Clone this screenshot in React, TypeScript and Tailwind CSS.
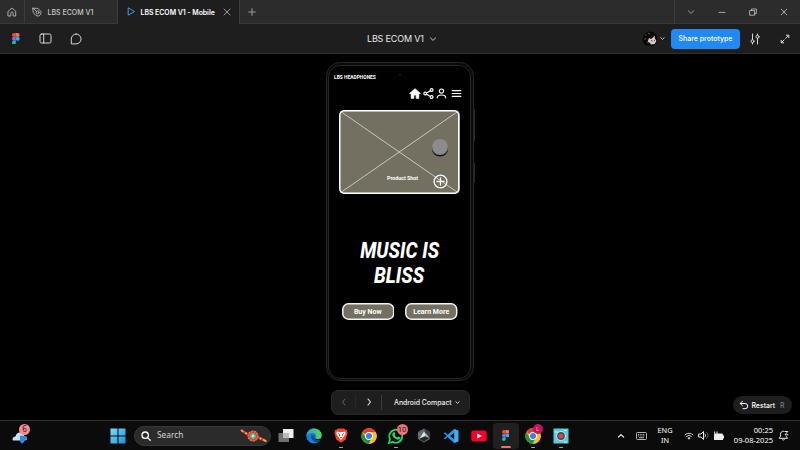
import React from "react";

type P = { className?: string; children?: React.ReactNode };

const Line = ({ w = 12, sw = 1, className = "", children, vb = "0 0 12 12" }: P & { w?: number; sw?: number; vb?: string }) => (
  <svg width={w} height={w} viewBox={vb} fill="none" stroke="currentColor" strokeWidth={sw} strokeLinecap="round" strokeLinejoin="round" className={"shrink-0 " + className}>
    {children}
  </svg>
);

const FigmaLogo = ({ h = 11 }: { h?: number }) => (
  <svg width={(h * 2) / 3} height={h} viewBox="0 0 20 30" className="shrink-0">
    <path d="M10 0H5a5 5 0 0 0 0 10h5z" fill="#f24e1e" />
    <path d="M10 0h5a5 5 0 0 1 0 10h-5z" fill="#ff7262" />
    <path d="M10 10H5a5 5 0 0 0 0 10h5z" fill="#a259ff" />
    <circle cx="15" cy="15" r="5" fill="#1abcfe" />
    <path d="M5 20h5v5a5 5 0 1 1-5-5z" fill="#0acf83" />
  </svg>
);

const Chrome = () => (
  <svg width="16" height="16" viewBox="0 0 16 16">
    <circle cx="8" cy="8" r="7.7" fill="#fbc116" />
    <path d="M1.3 4.2A7.7 7.7 0 0 1 14.7 4.2L8 8z" fill="#e33b2e" />
    <path d="M1.3 4.2A7.7 7.7 0 0 0 7.8 15.7L11 9.8 5 9.8z" fill="#229342" />
    <path d="M8 4.2h6.7a7.7 7.7 0 0 1-6.9 11.5L11.3 10z" fill="#fbc116" />
    <circle cx="8" cy="8" r="3.9" fill="#fff" />
    <circle cx="8" cy="8" r="3" fill="#3b7fe8" />
  </svg>
);

function TitleBar() {
  return (
    <div className="flex h-6 items-stretch border-b border-[#383838] bg-[#2c2c2c] text-[7px] text-[#c8c8c8]">
      <div className="flex w-[25px] items-center justify-center border-r border-[#3d3d3d]">
        <Line w={10} vb="0 0 10 10" sw={0.8}>
          <path d="M1.3 4.2 5 1l3.7 3.2V9H6.2V6.2a1.2 1.2 0 0 0-2.4 0V9H1.3z" />
        </Line>
      </div>
      <div className="flex w-[93px] items-center border-r border-[#3d3d3d] pl-[7px]">
        <Line w={10} vb="0 0 10 10" sw={0.8}>
          <path d="M1 1.2 6 1.4 9 4.600 8.700 7.200 6.800 9.100 4 8.600 1.600 6z" />
          <circle cx="5.600" cy="5.400" r="1.500" />
          <path d="m1 1.200 3.400 3.200" />
        </Line>
        <span className="ml-[5.500px] pt-[3px] font-medium whitespace-nowrap">LBS ECOM V1</span>
      </div>
      <div className="-mb-px flex w-[122px] items-center border-r border-[#3d3d3d] bg-[#1e1e1e] pb-px pl-[9px] text-white">
        <Line w={9} vb="0 0 9 9" className="text-[#3f9be8]">
          <path d="M1.5 1 7.5 4.5 1.5 8z" />
        </Line>
        <span className="ml-[4.500px] w-[74.500px] pt-[3px] font-semibold tracking-[-0.010em] whitespace-nowrap">LBS ECOM V1 - Mobile</span>
        <Line w={8} vb="0 0 8 8" sw={0.7} className="ml-[8px] text-[#d0d0d0]">
          <path d="m1 1 6 6M7 1 1 7" />
        </Line>
      </div>
      <div className="flex w-[24px] items-center justify-center">
        <Line w={8} vb="0 0 8 8" sw={0.7}>
          <path d="M4 .7v6.6M.7 4h6.6" />
        </Line>
      </div>
      <div className="flex-1" />
      <div className="flex w-[126px] items-center border-l border-[#3d3d3d] [&>div]:flex [&>div]:w-[31.3px] [&>div]:justify-center">
        <div>
          <Line w={8} vb="0 0 8 8" sw={0.7}><path d="M1.3 2.8 4 5.4l2.7-2.6" /></Line>
        </div>
        <div>
          <Line w={8} vb="0 0 8 8" sw={0.8}><path d="M1 4.4h6" /></Line>
        </div>
        <div>
          <Line w={8} vb="0 0 8 8" sw={0.8}><path d="M1 2.6h4.6v4.6H1zM2.5 2.4V1h4.8v4.6H5.8" /></Line>
        </div>
        <div>
          <Line w={8} vb="0 0 8 8" sw={0.8}><path d="m1.2 1.2 5.6 5.6M6.8 1.2 1.2 6.8" /></Line>
        </div>
      </div>
    </div>
  );
}

function Toolbar() {
  return (
    <div className="flex h-[30px] items-center border-b border-[#303030] bg-[#1e1e1e] text-[#d6d6d6]">
      <div className="flex w-[325px] items-center pl-[12px]">
        <FigmaLogo h={11.5} />
        <Line w={13} vb="0 0 13 13" sw={1} className="ml-[19.500px]">
          <rect x="1" y="2" width="11" height="9" rx="1.5" />
          <path d="M4.700 2v9" />
        </Line>
        <Line w={12} className="ml-[17.500px]" sw={1}>
          <path d="M6.2 1A4.8 4.8 0 1 1 6 10.9H1.3V6A4.9 4.9 0 0 1 6.2 1z" />
        </Line>
      </div>
      <div className="flex flex-1 items-center pl-[42px]">
        <span className="w-[58px] text-[9px] tracking-[-0.02em] whitespace-nowrap text-[#e8e8e8]">LBS ECOM V1</span>
        <Line w={8} vb="0 0 8 8" sw={0.9} className="ml-[4px]"><path d="M1.4 2.9 4 5.4l2.6-2.5" /></Line>
      </div>
      <div className="flex w-[158px] shrink-0 items-center">
        <svg width="16" height="16" viewBox="0 0 16 16">
          <circle cx="8" cy="8" r="7.6" fill="#080808" />
          <path d="M3 3.500 4.500 5M6 2l2 1.500M2.500 8l1.500-.5M5 11.500l1 1" stroke="#777" strokeWidth=".8" />
          <path d="m7 7 2 1 2-1.500 1.500-2 .5 3 1.500 2.500-2 3-3.500.5-1.500-2-2-.5z" fill="#d5cbc4" />
          <path d="m9 9.500 1.500.5M12 9l1 .8" stroke="#222" strokeWidth=".8" />
        </svg>
        <Line w={5} vb="0 0 5 5" sw={0.9} className="ml-[1.5px]"><path d="m.8 1.700 1.700 1.600 1.700-1.600" /></Line>
        <div className="ml-[6.500px] flex h-[20px] w-[69px] items-center justify-center rounded-[4px] bg-[#2389f2] pt-[2px] text-[7px] font-medium whitespace-nowrap text-white">
          Share prototype
        </div>
        <Line w={12} className="ml-[8.500px]">
          <path d="M3.5 1v5.7M3.5 9.8V11M8.5 11V5.3M8.5 2.2V1" />
          <circle cx="3.5" cy="8.2" r="1.5" />
          <circle cx="8.5" cy="3.8" r="1.5" />
        </Line>
        <Line w={10} vb="0 0 10 10" className="ml-[19px]">
          <path d="M5.8 4.2 8.7 1.3M6.3 1.2h2.5v2.5M4.2 5.8 1.3 8.7M1.2 6.3v2.5h2.5" />
        </Line>
      </div>
    </div>
  );
}

function Phone() {
  return (
    <div className="relative mt-[8px] ml-[325.5px] h-[319px] w-[148px] rounded-[14px] border border-[#252525] bg-[#0a0a0a] p-[1.5px]">
      <div className="absolute top-[46px] -right-[2.500px] h-[33px] w-[1.500px] rounded-r bg-[#292929]" />
      <div className="absolute top-[100px] -right-[2.500px] h-[20px] w-[1.500px] rounded-r bg-[#292929]" />
      <div className="absolute top-[11px] left-[72px] size-[2px] rounded-full bg-[#14212c]" />
      <div className="flex h-full flex-col rounded-[12px] border border-[#252525] bg-black text-white">
        <span className="mt-[8.500px] ml-[5px] block h-[7px] w-[43px] text-[4.900px] leading-[7px] font-bold whitespace-nowrap font-[Roboto,sans-serif]">LBS HEADPHONES</span>
        <div className="mt-[6px] flex h-[12px] items-center pl-[79.500px]">
          <svg width="12" height="11" viewBox="0 0 12 11">
            <path d="M6 .7.6 5.6h1.6v4.7h2.6V7h2.4v3.3h2.6V5.6h1.6z" fill="#fff" stroke="#fff" strokeWidth=".8" />
          </svg>
          <Line w={11} vb="0 0 11 11" sw={1.2} className="ml-[2px]">
            <circle cx="2.2" cy="5.5" r="1.4" />
            <circle cx="8.6" cy="2" r="1.4" />
            <circle cx="8.6" cy="9" r="1.4" />
            <path d="m3.5 4.9 3.9-2.2M3.5 6.2l3.9 2.2" />
          </Line>
          <Line w={11} vb="0 0 11 11" sw={1.2} className="ml-[2.500px]">
            <circle cx="5.5" cy="3.1" r="2.1" />
            <path d="M1.2 9.8C1.4 7.8 3 7 5.5 7s4.100.8 4.300 2.800" />
          </Line>
          <Line w={11} vb="0 0 11 11" sw={1.2} className="ml-[4px]">
            <path d="M1.200 2.700h8.600M1.200 5.500h8.600M1.200 8.300h8.600" />
          </Line>
        </div>
        <div className="relative mt-[11px] ml-[10px] h-[84px] w-[120.500px] shrink-0 overflow-hidden rounded-[5px] bg-[#737062]">
          <svg className="absolute inset-0 size-full" viewBox="0 0 120.500 84">
            <path d="M1 1 119.500 83M119.500 1 1 83" stroke="#d1d0cc" strokeWidth=".9" />
            <rect x=".75" y=".75" width="119" height="82.500" rx="4.500" fill="none" stroke="#fff" strokeWidth="1.500" />
          </svg>
          <span className="absolute top-[65px] left-[48px] text-[5.300px] leading-[7px] font-bold whitespace-nowrap font-[Roboto,sans-serif]">Product Shot</span>
          <div className="absolute top-[28.500px] left-[93px] size-[16px] rounded-full bg-[#8b8b8b] shadow-[0_1.500px_0_0_#111]" />
          <svg className="absolute top-[63.500px] left-[94px]" width="15" height="15" viewBox="0 0 15 15" fill="none" stroke="#fff" strokeWidth="1.300">
            <circle cx="7.500" cy="7.500" r="6.400" />
            <path d="M7.500 3.500v8M3.500 7.500h8" />
          </svg>
        </div>
        <div className="mt-[43.500px] flex flex-col items-center text-[22px] leading-[25.500px] font-extrabold italic font-[Roboto,sans-serif]">
          <span className="scale-x-[.865] whitespace-nowrap">MUSIC IS</span>
          <span className="scale-x-[.865] whitespace-nowrap">BLISS</span>
        </div>
        <div className="mt-[14px] ml-[12.500px] flex gap-[11px] font-[Roboto,sans-serif]">
          {["Buy Now", "Learn More"].map((t) => (
            <div key={t} className="relative flex h-[17px] w-[52.500px] items-center justify-center pt-[2px] text-[7px] font-bold whitespace-nowrap">
              <svg className="absolute inset-0 size-full" viewBox="0 0 52.500 17">
                <rect x=".8" y=".8" width="50.900" height="15.400" rx="5.500" fill="#737062" stroke="#f1f1ee" strokeWidth="1.500" />
              </svg>
              <span className="relative">{t}</span>
            </div>
          ))}
        </div>
      </div>
    </div>
  );
}

function Canvas() {
  return (
    <div className="flex h-[366px] flex-col overflow-hidden bg-black">
      <Phone />
      <div className="mt-[8.500px] flex items-start">
        <div className="ml-[331px] flex h-[25px] w-[139px] items-center rounded-[7px] border border-[#292929] bg-[#1e1e1e] text-[#ededed]">
          <div className="flex w-[23px] justify-center text-[#656565]">
            <Line w={8} vb="0 0 8 8"><path d="M5 1 2.500 4 5 7" /></Line>
          </div>
          <div className="h-[14px] w-px bg-[#292929]" />
          <div className="flex w-[25px] justify-center">
            <Line w={8} vb="0 0 8 8" sw={1.100}><path d="M3 1l2.500 3L3 7" /></Line>
          </div>
          <div className="h-[15px] w-px bg-[#3c3c3c]" />
          <span className="ml-[12px] w-[57.500px] pt-[2px] text-[6.900px] font-medium whitespace-nowrap">Android Compact</span>
          <Line w={5} vb="0 0 5 5" sw={0.9} className="ml-[3px]"><path d="m.8 1.700 1.700 1.600 1.700-1.600" /></Line>
        </div>
        <div className="mt-[6.500px] ml-[263px] flex h-[18px] w-[59px] items-center rounded-full bg-[#1e1e1e] pl-[6px] text-[6.900px] font-medium text-white">
          <Line w={10} vb="0 0 10 10"><path d="M3.500 1.200 1.200 3.500l2.300 2.300M1.300 3.500h4.800a2.600 2.600 0 0 1 0 5.200H4" /></Line>
          <span className="ml-[2.500px] pt-[2px]">Restart</span>
          <span className="ml-[5px] pt-[2px] text-[#777]">R</span>
        </div>
      </div>
    </div>
  );
}

const Slot = ({ children, dot = "", className = "" }: P & { dot?: string }) => (
  <div className={"relative flex h-[27px] w-[27.500px] shrink-0 items-center justify-center " + className}>
    {children}
    {dot && <div className={"absolute bottom-[1px] h-[1.500px] rounded-full " + dot} />}
  </div>
);

function Taskbar() {
  return (
    <div className="flex h-[30px] items-center border-t border-[#303030] bg-[#0b0b0b] text-white font-[Noto_Sans,sans-serif]">
      <div className="relative ml-[11px] h-[20px] w-[20px]">
        <svg width="20" height="20" viewBox="0 0 20 20">
          <path d="M1.500 13.500c0-2 1.500-3 3-3 .5-3 3-4.500 5-4 2.500.2 3.500 2 4 4 2 0 3 1 2.500 2.500-.4 1.500-2 1.500-4 1.500H3c-1 0-1.500-.3-1.500-1z" fill="#c5e4fb" />
          <path d="M9 9.500 13.500 10c2 0 3 1 2.500 2.500-.4 1.200-1.500 1.500-3 1.500v2l-2 1.700L9 15.500z" fill="#3289df" />
        </svg>
        <div className="absolute top-[-2px] left-[8px] flex size-[11px] items-center justify-center rounded-full bg-[#f98b92] text-[8px] leading-none text-[#2c171b]">6</div>
      </div>
      <svg width="16" height="16" viewBox="0 0 16 16" className="ml-[79px] shrink-0">
        <defs>
          <linearGradient id="win" x1="0" y1="0" x2="1" y2="1"><stop stopColor="#80ddf7" /><stop offset="1" stopColor="#178fda" /></linearGradient>
        </defs>
        <path d="M.5.500h7v7h-7zM8.500.500h7v7h-7zM.5 8.500h7v7h-7zM8.500 8.500h7v7h-7z" fill="url(#win)" />
      </svg>
      <div className="ml-[8px] flex h-[20px] w-[137px] shrink-0 items-center rounded-full border border-[#383838] bg-[#2b2b2b] pl-[6px]">
        <Line w={10} vb="0 0 10 10" sw={1.300}><circle cx="4.200" cy="4.200" r="3.200" /><path d="m6.600 6.600 2.600 2.600" /></Line>
        <span className="ml-[6px] w-[28px] text-[8.300px] text-[#d8d8d8]">Search</span>
        <svg width="28" height="14" viewBox="0 0 28 14" className="ml-[55px] shrink-0">
          <path d="m1 1 6 4 5 1 5 2 9 4" stroke="#cf2f3e" strokeWidth="2.600" fill="none" />
          <path d="m1 1 2.500 2M23 10.500l3.500 2" stroke="#e4b83a" strokeWidth="1.500" />
          <circle cx="13" cy="7" r="5.600" fill="#d63a35" />
          <circle cx="13" cy="7" r="4.600" fill="none" stroke="#e8843c" strokeWidth="1.500" strokeDasharray="1.500 1.300" />
          <circle cx="13" cy="7" r="2.900" fill="#55bd95" />
          <circle cx="13" cy="7" r="1.200" fill="#d7ead3" />
          <circle cx="6" cy="4.300" r="1" fill="#f0c34b" /><circle cx="20.500" cy="9.500" r="1" fill="#f0c34b" />
        </svg>
      </div>
      <Slot className="ml-[1.500px]">
        <svg width="16" height="15" viewBox="0 0 16 15"><path d="M5 1h10.500v9H5z" fill="#eee" /><path d="M.5 5H11v9H.5z" fill="#717171" /><path d="M5 5h6v5H5z" fill="#bbb" /></svg>
      </Slot>
      <Slot>
        <svg width="16" height="16" viewBox="0 0 16 16">
          <defs><linearGradient id="edge"><stop stopColor="#1ca5de" /><stop offset="1" stopColor="#61d64c" /></linearGradient></defs>
          <circle cx="8" cy="8" r="7.600" fill="#1680d8" />
          <path d="M.4 7.500C1 3 4 .4 8 .4c4.500 0 7.600 3 7.600 6.600 0 3-2 4-4 4-1.800 0-2.500-.7-1.800-1.700C11 7 9 5 6.500 5 3.500 5 1.500 6 .4 8z" fill="url(#edge)" />
          <path d="M5.500 7c-1.500 4 2 7 6 7.500l2.500-2.300c-3 1.300-6-.2-6-2.700L9 7.500z" fill="#11498c" />
          <path d="M8.300 9.300c.7 2 4 2.500 7.300 1.200l-.8 1.500C11.500 13.200 8 12 8.300 9.300z" fill="#0b0b0b" />
        </svg>
      </Slot>
      <Slot dot="w-[4px] bg-[#aaa]">
        <svg width="14" height="15" viewBox="0 0 14 15"><path d="M4 .5h6l1.500 1.300L13 2l.5 3-1.800 6.500L7 14.700l-4.700-3.200L.5 5 1 2l1.500-.2z" fill="#f34728" /><path d="M3 3.500 5.500 4h3l2.500-.5.700 2.200-2 3L7 12 4.300 8.700l-2-3z" fill="#fff" /><path d="m4 5.500 1.500.700v2M10 5.500l-1.500.700v2M6 9.500h2" stroke="#f34728" fill="none" /></svg>
      </Slot>
      <Slot><Chrome /></Slot>
      <Slot dot="w-[4px] bg-[#aaa]">
        <svg width="16" height="16" viewBox="0 0 16 16"><path d="M1 15 2 11.200A6.500 6.500 0 1 1 4.800 14z" fill="none" stroke="#2bd669" strokeWidth="1.700" /><path d="M5.300 4.500 6.400 4l1 2-.8 1c.7 1.300 1.500 2 2.700 2.500l1-1 2 1c0 2-1.700 2.500-3.300 2-2.500-.8-5.200-3.500-4.700-5.500z" fill="#2bd669" /></svg>
        <div className="absolute top-[2px] left-[14px] flex size-[11px] items-center justify-center rounded-full bg-[#ef7378] text-[7.500px] leading-none text-[#281316]">10</div>
      </Slot>
      <Slot>
        <svg width="14" height="15" viewBox="0 0 14 15"><path d="m7 .5 6 3.500v7l-6 3.500L1 11V4z" fill="#626970" /><path d="m7 .5 6 3.500v7L8.500 4.500z" fill="#353c42" /><path d="M7 3.500 9 7l-2 2-5 2.500z" fill="#dde3e6" /><path d="m7 8.500 5 1.500-5 3.500-5-2.500z" fill="#22282d" /><path d="m9 5.500 3 4-3-.7z" fill="#a9b1b7" /></svg>
      </Slot>
      <Slot>
        <svg width="16" height="16" viewBox="0 0 16 16"><path d="m11.300 1 4 1.800v10.400l-4 1.800L4.500 8.900 2.200 11.300.7 10.500l3.200-2.700L.7 5.200l1.500-.9L4.600 6.700zM11.500 4.600 7 8l4.500 3.400z" fill="#279bea" fillRule="evenodd" /><path d="m11.300 1 4 1.800v10.400l-4 1.800z" fill="#3cb0f5" /></svg>
      </Slot>
      <Slot>
        <svg width="16" height="12" viewBox="0 0 16 12"><rect x=".3" y=".5" width="15.400" height="11" rx="2.500" fill="#f7002d" /><path d="M6.200 3.500 11 6l-4.800 2.500z" fill="#fff" /></svg>
      </Slot>
      <div className="relative flex h-[26px] w-[26px] shrink-0 items-center justify-center rounded-[4px] bg-[#202020]">
        <FigmaLogo h={11} />
        <div className="absolute bottom-[1px] h-[2px] w-[10px] rounded-full bg-[#ef716f]" />
      </div>
      <Slot className="ml-[1px]" dot="w-[4px] bg-[#aaa]">
        <Chrome />
        <div className="absolute top-[2px] left-[13px] flex size-[10px] items-center justify-center rounded-full bg-[#c4145c] text-[6px] leading-none text-[#f4b9d0]">L</div>
      </Slot>
      <Slot dot="w-[4px] bg-[#aaa]">
        <svg width="16" height="16" viewBox="0 0 16 16"><path d="M.5.500h15v15H.5z" fill="#56cddd" /><path d="M1.500 4h3M11 2.500h3M11 14h3" stroke="#d0f7f8" /><circle cx="8" cy="8" r="4.800" fill="#d8ecec" /><circle cx="8" cy="8" r="3.900" fill="#334d58" /><circle cx="8" cy="8" r="2.600" fill="#de4146" /></svg>
      </Slot>
      <div className="flex-1" />
      <div className="flex w-[183px] shrink-0 items-center">
        <Line w={8} vb="0 0 8 8" sw={1.100}><path d="M1.300 5.200 4 2.600l2.700 2.600" /></Line>
        <svg width="11" height="8" viewBox="0 0 11 8" className="ml-[11px]" fill="none" stroke="#ddd" strokeWidth=".8"><rect x=".5" y=".5" width="10" height="7" rx="1" /><path d="M2 2.500h7M2 4h7" strokeDasharray="1 .7" /><path d="M3 5.700h5" /></svg>
        <div className="ml-[8px] w-[20px] text-center text-[7.400px] leading-[10px]"><div className="-mt-px">ENG</div>IN</div>
        <svg width="10" height="8" viewBox="0 0 10 8" className="ml-[8.500px]" fill="none" stroke="#ddd" strokeWidth=".9"><path d="M.8 3a6 6 0 0 1 8.400 0M2.300 4.600a3.900 3.900 0 0 1 5.400 0" /><circle cx="5" cy="6.300" r=".8" fill="#ddd" /></svg>
        <Line w={11} vb="0 0 11 11" className="ml-[4.500px]" sw={0.9}><path d="M1 4h2l2.500-2.500v8L3 7H1zM7 4c.7.800.7 2.200 0 3" /><path d="M8.700 2.500c1.700 1.500 1.700 4.500 0 6" stroke="#666" /></Line>
        <svg width="12" height="10" viewBox="0 0 12 10" className="ml-[4px]"><path d="M2.500 2.500h6.500l1 1v1h1v3h-1v1.500H1v-5z" fill="#eee" /><path d="M1.700.5v3c0 1.500 2.300 1.500 2.300 0v-3M2.800 4.500v3" fill="none" stroke="#eee" /></svg>
        <div className="ml-[7px] w-[41px] text-right text-[7.500px] leading-[10px] whitespace-nowrap"><div className="-mt-px">00:25</div>09-08-2025</div>
        <Line w={11} vb="0 0 11 11" className="ml-[4.500px]" sw={0.9}><path d="M5.500 1.200C3.500 1.200 2.500 2.500 2.500 4.300v2L1.200 8.300h8.300L8.300 6.500M4.200 9.500c.7.800 1.700.800 2.300 0M6.800 1.500h3L7 4.800h3" /></Line>
      </div>
    </div>
  );
}

export default function App() {
  return (
    <div className="h-[450px] w-[800px] overflow-hidden bg-black font-[Inter,sans-serif]">
      <TitleBar />
      <Toolbar />
      <Canvas />
      <Taskbar />
    </div>
  );
}
